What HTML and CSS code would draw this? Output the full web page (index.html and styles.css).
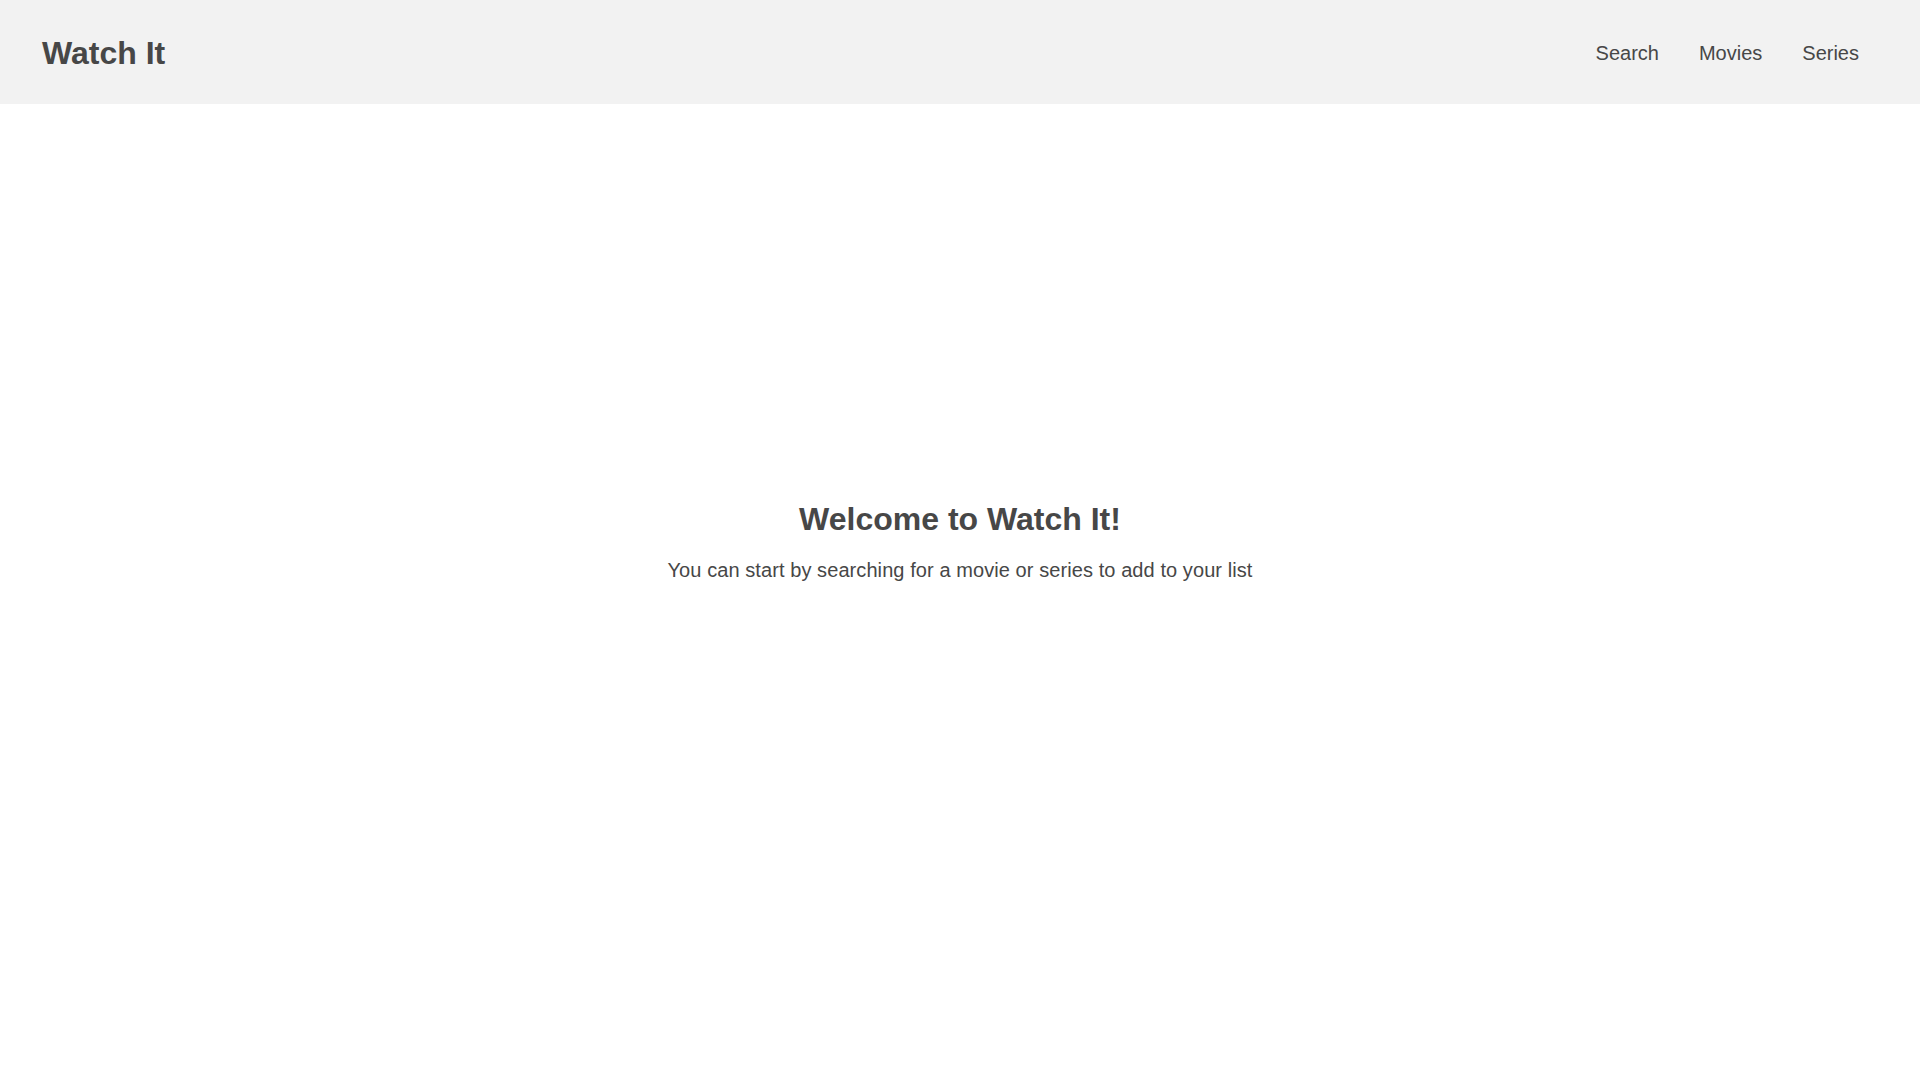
FILE: index.html
```html
<!DOCTYPE html>
<html lang="en">
<head>
<meta charset="utf-8">
<title>Watch It</title>
<link rel="stylesheet" href="styles.css">
</head>
<body>
<header class="topbar">
  <a class="logo" href="#">Watch It</a>
  <nav class="nav">
    <a class="nav-link" href="#">Search</a>
    <a class="nav-link" href="#">Movies</a>
    <a class="nav-link" href="#">Series</a>
  </nav>
</header>
<main class="main">
  <section class="welcome">
    <h1 class="welcome-title">Welcome to Watch It!</h1>
    <p class="welcome-text">You can start by searching for a movie or series to add to your list</p>
  </section>
</main>
</body>
</html>
```
FILE: styles.css
```css
* { box-sizing: border-box; }
html, body {
  margin: 0;
  padding: 0;
  background: #ffffff;
  color: #474747;
  font-family: "Liberation Sans", Arial, Helvetica, sans-serif;
}
a { color: inherit; text-decoration: none; }
.topbar {
  height: 104px;
  background: #f2f2f2;
  display: flex;
  align-items: center;
  justify-content: space-between;
  padding: 0 41px 0 42px;
}
.logo {
  font-size: 32px;
  font-weight: bold;
  padding-top: 2px;
}
.nav {
  display: flex;
  align-items: center;
  padding-top: 3px;
}
.nav-link {
  font-size: 20px;
  padding: 0 20px;
}
.main {
  height: calc(100vh - 104px);
  display: flex;
  align-items: center;
  justify-content: center;
  padding-bottom: 104px;
}
.welcome {
  text-align: center;
}
.welcome-title {
  margin: 0;
  font-size: 32px;
  line-height: 40px;
  font-weight: bold;
}
.welcome-text {
  margin: 19px 0 0;
  font-size: 20px;
  line-height: 24px;
  letter-spacing: 0.08px;
}
```
